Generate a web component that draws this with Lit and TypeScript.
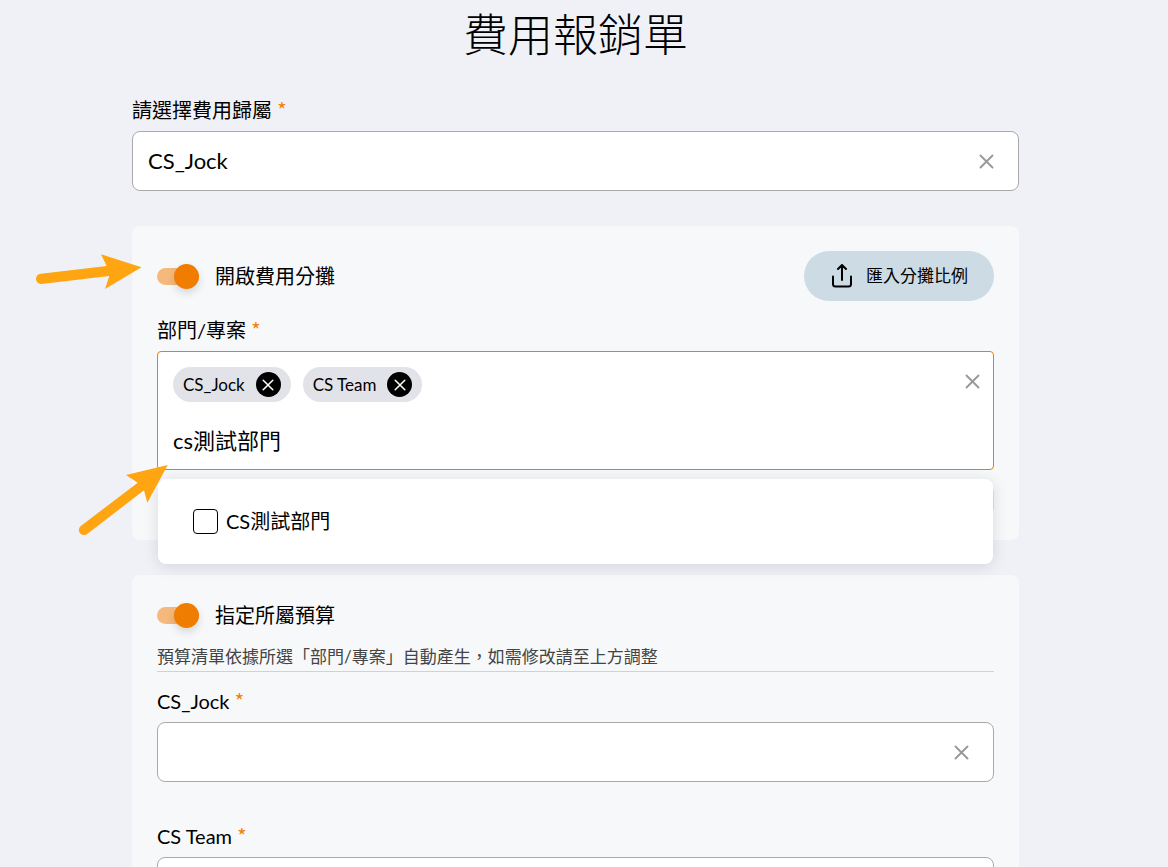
import { LitElement, html, css, svg } from "lit";
import { customElement, property, state } from "lit/decorators.js";

const cross = svg`<path d="M1.5 1.5 L13.5 13.5 M13.5 1.5 L1.5 13.5" fill="none" stroke="currentColor" stroke-width="1.9" stroke-linecap="round"/>`;

const shared = css`
  *, *::before, *::after { box-sizing: border-box; }
  :host {
    font-family: Lato, "Noto Sans CJK TC", sans-serif;
    font-size: 20px;
    line-height: 30px;
    color: #000;
  }
  button, input {
    margin: 0;
    padding: 0;
    border: 0;
    background: none;
    font: inherit;
    color: inherit;
    outline: none;
  }
  button { cursor: pointer; }
  .required {
    color: #f08200;
    font-family: "Noto Sans CJK TC", sans-serif;
    font-size: 20px;
    line-height: 0;
  }
  .clear {
    flex: none;
    display: grid;
    place-items: center;
    width: 15px;
    height: 15px;
    color: #999;
  }
`;

@customElement("text-field")
class TextField extends LitElement {
  @property() label = "";
  @property() value = "";

  static styles = [shared, css`
    :host { display: block; }
    label { display: block; margin-bottom: 6px; }
    .box {
      display: flex;
      align-items: center;
      height: 60px;
      padding: 0 24px 0 15px;
      background: #fff;
      border: 1px solid #aaa;
      border-radius: 8px;
    }
    input { flex: 1; min-width: 0; height: 30px; font-size: 22px; }
  `];

  render() {
    return html`
      <label for="field">${this.label} <span class="required">*</span></label>
      <div class="box">
        <input id="field" type="text" .value=${this.value}
          @input=${(e: Event) => (this.value = (e.target as HTMLInputElement).value)} />
        <button class="clear" type="button" aria-label="清除" @click=${() => (this.value = "")}>
          <svg width="15" height="15" viewBox="0 0 15 15">${cross}</svg>
        </button>
      </div>`;
  }
}

@customElement("toggle-switch")
class ToggleSwitch extends LitElement {
  @property() label = "";

  static styles = [shared, css`
    :host { display: block; }
    label { display: flex; align-items: center; gap: 16px; cursor: pointer; }
    input {
      appearance: none;
      display: flex;
      align-items: center;
      width: 42px;
      height: 17px;
      border-radius: 9px;
      background: #c4c4c4;
      cursor: pointer;
    }
    input::before {
      content: "";
      width: 25px;
      height: 25px;
      border-radius: 50%;
      background: #fff;
      box-shadow: 0 4px 8px rgba(0, 0, 0, 0.14);
    }
    input:checked { background: #f5b97c; justify-content: flex-end; }
    input:checked::before { background: #f07c00; }
  `];

  render() {
    return html`<label><input type="checkbox" role="switch" checked />${this.label}</label>`;
  }
}

@customElement("app-root")
class AppRoot extends LitElement {
  @state() private chips = ["CS_Jock", "CS Team"];
  @state() private query = "cs測試部門";

  static styles = [shared, css`
    :host {
      display: block;
      position: relative;
      height: 100vh;
      overflow: hidden auto;
      scrollbar-width: none;
      background: #f0f1f7;
      padding-right: 17px;
    }
    form { max-width: 887px; margin: 0 auto; padding-bottom: 40px; }
    h1 {
      margin: 0 0 25px;
      font-size: 45px;
      font-weight: 300;
      line-height: 70px;
      text-align: center;
    }
    .card {
      margin-top: 35px;
      padding: 25px;
      background: #f7f8fa;
      border-radius: 8px;
    }
    .head { display: flex; justify-content: space-between; align-items: center; margin-bottom: 14px; }
    .import {
      display: flex;
      align-items: center;
      justify-content: center;
      gap: 11px;
      min-width: 190px;
      height: 50px;
      border-radius: 25px;
      background: #cddbe4;
      font-size: 17px;
    }
    .label { display: block; margin-bottom: 6px; }
    .picker { position: relative; }
    .multi {
      display: flex;
      align-items: flex-start;
      padding: 15px 13px 13px 15px;
      background: #fff;
      border: 1px solid #f07c00;
      border-radius: 4px;
    }
    .multi .clear { margin-top: 7px; }
    .entry { flex: 1; min-width: 0; display: grid; gap: 24px; }
    .entry input { width: 100%; height: 30px; font-size: 22px; }
    .chips { display: flex; flex-wrap: wrap; gap: 12px; min-height: 35px; }
    .chip {
      display: flex;
      align-items: center;
      gap: 11px;
      height: 35px;
      padding: 0 10px;
      border-radius: 18px;
      background: #e2e3e9;
      font-size: 17px;
    }
    .remove {
      display: grid;
      place-items: center;
      width: 25px;
      height: 25px;
      border-radius: 50%;
      background: #000;
      color: #fff;
    }
    .menu {
      position: absolute;
      top: calc(100% + 9px);
      left: 1px;
      right: 1px;
      padding: 27px 35px 28px;
      background: #fff;
      border-radius: 8px;
      box-shadow: 0 2px 16px rgba(0, 0, 0, 0.12);
    }
    .option { display: flex; align-items: center; gap: 8px; }
    .option input {
      appearance: none;
      width: 25px;
      height: 25px;
      border: 1px solid #000;
      border-radius: 4px;
      background: #fff;
    }
    .option input:checked { background: #f07c00; }
    .ratio {
      width: 190px;
      height: 30px;
      margin: 15px 0 0 auto;
      border-radius: 8px;
      background: #b8f3f0;
    }
    .note {
      margin: 12px 0 14px;
      border-bottom: 1px solid #d0d2d6;
      font-size: 17px;
      line-height: 29px;
      color: #444;
    }
    .fields { display: grid; gap: 39px; }
    .pointers { position: absolute; top: 0; left: 0; pointer-events: none; }
  `];

  render() {
    return html`
      <form @submit=${(e: Event) => e.preventDefault()}>
        <h1>費用報銷單</h1>
        <text-field label="請選擇費用歸屬" value="CS_Jock"></text-field>

        <section class="card">
          <div class="head">
            <toggle-switch label="開啟費用分攤"></toggle-switch>
            <button class="import" type="button">
              <svg width="25" height="25" viewBox="0 0 25 25" fill="none" stroke="#000" stroke-width="2"
                stroke-linecap="round" stroke-linejoin="round">
                <path d="M3 12.5 V20 Q3 22.5 5.5 22.5 H18.5 Q21 22.5 21 20 V12.5 M12 16 V2 M8 5 L12 1 L16 5" />
              </svg>匯入分攤比例
            </button>
          </div>
          <label class="label" for="department">部門/專案 <span class="required">*</span></label>
          <div class="picker">
            <div class="multi">
              <div class="entry">
                <div class="chips">
                  ${this.chips.map((name) => html`
                    <span class="chip">${name}
                      <button class="remove" type="button" aria-label="移除"
                        @click=${() => (this.chips = this.chips.filter((c) => c !== name))}>
                        <svg width="12" height="12" viewBox="0 0 15 15">${cross}</svg>
                      </button>
                    </span>`)}
                </div>
                <input id="department" type="text" .value=${this.query}
                  @input=${(e: Event) => (this.query = (e.target as HTMLInputElement).value)} />
              </div>
              <button class="clear" type="button" aria-label="清除" @click=${() => { this.chips = []; this.query = ""; }}>
                <svg width="15" height="15" viewBox="0 0 15 15">${cross}</svg>
              </button>
            </div>
            <div class="menu">
              <label class="option"><input type="checkbox" />CS測試部門</label>
            </div>
          </div>
          <div class="ratio"></div>
        </section>

        <section class="card">
          <toggle-switch label="指定所屬預算"></toggle-switch>
          <p class="note">預算清單依據所選「部門/專案」自動產生，如需修改請至上方調整</p>
          <div class="fields">
            <text-field label="CS_Jock"></text-field>
            <text-field label="CS Team"></text-field>
          </div>
        </section>
      </form>
      <svg class="pointers" width="180" height="550" viewBox="0 0 180 550" fill="#ffa511" aria-hidden="true">
        <path d="M40.7 273.8 L106.7 266 L101 254.3 L141.5 267.3 L105 289 L109.3 276 L41.5 284 A5.1 5.1 0 0 1 40.7 273.8 Z" />
        <path d="M80.8 526 L137.7 482.7 L126 475 L167.7 465 L147.3 502.7 L144 490.3 L87.2 534 A5.1 5.1 0 0 1 80.8 526 Z" />
      </svg>`;
  }
}
